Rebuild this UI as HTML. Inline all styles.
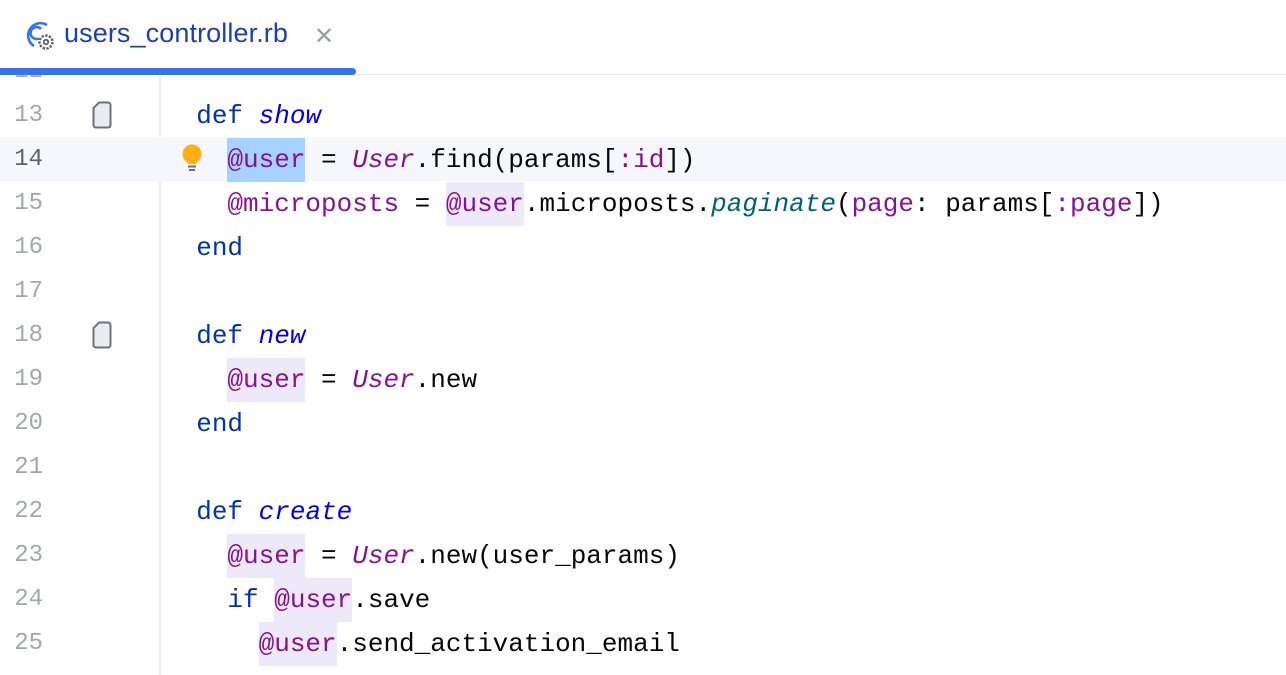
<!DOCTYPE html>
<html><head><meta charset="utf-8"><style>
body{margin:0;width:1286px;height:664px;overflow:hidden;background:#fff;position:relative;font-family:"Liberation Sans",sans-serif}
.tabbar{position:absolute;left:0;top:0;width:1286px;height:75px;background:#fff;z-index:5;border-bottom:1px solid #ebecf0;box-sizing:border-box}
.tabtxt{position:absolute;left:64px;top:18px;font-size:27px;color:#1d3fb5;letter-spacing:0.1px}
.close{position:absolute;left:314px;top:22px;font-size:24px;color:#9a9ca3}
.ul{position:absolute;left:0;top:68px;width:356px;height:7px;background:#3574f0;border-radius:0 4px 4px 0}
.gutter{position:absolute;left:159px;top:75px;width:2px;height:600px;background:#ebecf0}
.row{position:absolute;left:0;width:1286px;height:44px}
.ln{position:absolute;left:0;width:43px;text-align:right;font-family:"Liberation Mono",monospace;font-size:24px;color:#a3a6ad;line-height:46px}
.code{position:absolute;left:165px;top:1px;font-family:"Liberation Mono","DejaVu Sans Mono",monospace;font-size:26px;line-height:44px;white-space:pre;color:#080808}
.k{color:#0033b3}.m{color:#0000f2;font-style:italic}.v{color:#871094}.c{color:#871094;font-style:italic}.p{color:#00627a;font-style:italic}
.h{background:#ede9f8;display:inline-block;height:44px}
.s{background:#a6d2ff;display:inline-block;height:44px}
.doc{position:absolute;left:92px;width:20px;height:28px}
</style></head><body>
<div class="tabbar">
<svg style="position:absolute;left:22px;top:19px" width="36" height="34" viewBox="0 0 36 34"><path d="M25 6A12 12 0 1 0 12 27" fill="none" stroke="#3574f0" stroke-width="2.6"/><path d="M19 10a6 6 0 1 0 -2 9.5" fill="none" stroke="#3574f0" stroke-width="2.6"/><circle cx="24" cy="23" r="6.5" fill="#fff" stroke="#5f6169" stroke-width="2.4" stroke-dasharray="2.4 1.3"/><circle cx="24" cy="23" r="2.2" fill="none" stroke="#5f6169" stroke-width="1.8"/></svg>
<div class="tabtxt">users_controller.rb</div><div class="close">✕</div><div class="ul"></div></div>
<div class="gutter"></div>
<div class="row" style="top:49px"><div class="ln">12</div></div>
<div class="row" style="top:93px"><div class="ln">13</div><svg class="doc" style="top:8px" viewBox="0 0 20 28"><path d="M7 1.5H16a2.5 2.5 0 0 1 2.5 2.5V24a2.5 2.5 0 0 1-2.5 2.5H4a2.5 2.5 0 0 1-2.5-2.5V7Z" fill="#ebecf0" stroke="#6c707e" stroke-width="2"/></svg><div class="code">  <span class="k">def</span> <span class="m">show</span></div></div>
<div class="row" style="top:137px;background:#f5f7fd"><div class="ln" style="color:#5f6169">14</div>
<svg style="position:absolute;left:180px;top:6px" width="24" height="32" viewBox="0 0 24 32"><circle cx="12" cy="11" r="9.5" fill="#ffaf0f"/><path d="M7.5 16h9v5h-9z" fill="#ffaf0f"/><path d="M8 23.5h8M9 27h6" stroke="#6c707e" stroke-width="2"/></svg>
<div class="code">    <span class="s v">@user</span> = <span class="c">User</span>.find(params[<span class="v">:id</span>])</div></div>
<div class="row" style="top:181px"><div class="ln">15</div><div class="code">    <span class="v">@microposts</span> = <span class="h v">@user</span>.microposts.<span class="p">paginate</span>(<span class="v">page</span>: params[<span class="v">:page</span>])</div></div>
<div class="row" style="top:225px"><div class="ln">16</div><div class="code">  <span class="k">end</span></div></div>
<div class="row" style="top:269px"><div class="ln">17</div></div>
<div class="row" style="top:313px"><div class="ln">18</div><svg class="doc" style="top:8px" viewBox="0 0 20 28"><path d="M7 1.5H16a2.5 2.5 0 0 1 2.5 2.5V24a2.5 2.5 0 0 1-2.5 2.5H4a2.5 2.5 0 0 1-2.5-2.5V7Z" fill="#ebecf0" stroke="#6c707e" stroke-width="2"/></svg><div class="code">  <span class="k">def</span> <span class="m">new</span></div></div>
<div class="row" style="top:357px"><div class="ln">19</div><div class="code">    <span class="h v">@user</span> = <span class="c">User</span>.new</div></div>
<div class="row" style="top:401px"><div class="ln">20</div><div class="code">  <span class="k">end</span></div></div>
<div class="row" style="top:445px"><div class="ln">21</div></div>
<div class="row" style="top:489px"><div class="ln">22</div><div class="code">  <span class="k">def</span> <span class="m">create</span></div></div>
<div class="row" style="top:533px"><div class="ln">23</div><div class="code">    <span class="h v">@user</span> = <span class="c">User</span>.new(user_params)</div></div>
<div class="row" style="top:577px"><div class="ln">24</div><div class="code">    <span class="k">if</span> <span class="h v">@user</span>.save</div></div>
<div class="row" style="top:621px"><div class="ln">25</div><div class="code">      <span class="h v">@user</span>.send_activation_email</div></div>
</body></html>
